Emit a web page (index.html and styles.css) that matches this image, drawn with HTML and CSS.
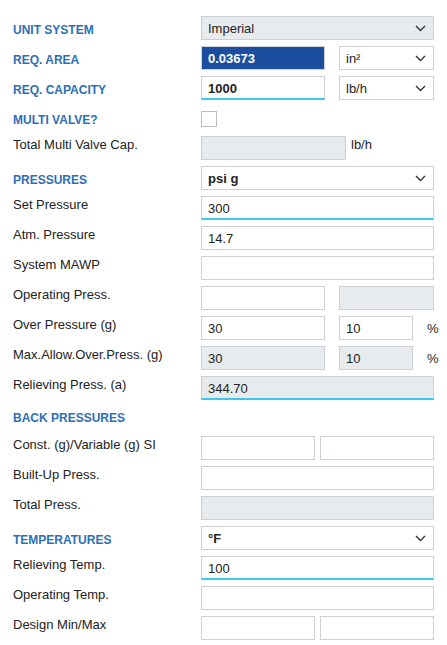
FILE: index.html
```html
<!DOCTYPE html>
<html>
<head>
<meta charset="utf-8">
<link rel="stylesheet" href="styles.css">
</head>
<body>
<div class="form">
  <div class="lbl head">UNIT SYSTEM</div>
  <div class="ctl"><div class="sel gray"><span>Imperial</span><svg class="chev" width="11" height="7" viewBox="0 0 11 7"><path d="M1 1l4.5 4.5L10 1" fill="none" stroke="#333" stroke-width="1.4"/></svg></div></div>

  <div class="lbl head">REQ. AREA</div>
  <div class="ctl split"><input class="inp w124 hl" value="0.03673"><div class="sel w95"><span>in²</span><svg class="chev" width="11" height="7" viewBox="0 0 11 7"><path d="M1 1l4.5 4.5L10 1" fill="none" stroke="#333" stroke-width="1.4"/></svg></div></div>

  <div class="lbl head">REQ. CAPACITY</div>
  <div class="ctl split"><input class="inp w124 focus strong" value="1000"><div class="sel w95"><span>lb/h</span><svg class="chev" width="11" height="7" viewBox="0 0 11 7"><path d="M1 1l4.5 4.5L10 1" fill="none" stroke="#333" stroke-width="1.4"/></svg></div></div>

  <div class="lbl head">MULTI VALVE?</div>
  <div class="ctl"><div class="check"></div></div>

  <div class="lbl">Total Multi Valve Cap.</div>
  <div class="ctl unitrow"><input class="inp w145 dis" value=""><span class="unit">lb/h</span></div>

  <div class="lbl head">PRESSURES</div>
  <div class="ctl"><div class="sel"><span class="strong">psi g</span><svg class="chev" width="11" height="7" viewBox="0 0 11 7"><path d="M1 1l4.5 4.5L10 1" fill="none" stroke="#333" stroke-width="1.4"/></svg></div></div>

  <div class="lbl">Set Pressure</div>
  <div class="ctl"><input class="inp focus" value="300"></div>

  <div class="lbl">Atm. Pressure</div>
  <div class="ctl"><input class="inp" value="14.7"></div>

  <div class="lbl">System MAWP</div>
  <div class="ctl"><input class="inp" value=""></div>

  <div class="lbl">Operating Press.</div>
  <div class="ctl split"><input class="inp w124" value=""><input class="inp w95 dis" value=""></div>

  <div class="lbl">Over Pressure (g)</div>
  <div class="ctl split"><input class="inp w124" value="30"><input class="inp w74" value="10"><span class="pct">%</span></div>

  <div class="lbl">Max.Allow.Over.Press. (g)</div>
  <div class="ctl split"><input class="inp w124 dis" value="30"><input class="inp w74 dis" value="10"><span class="pct">%</span></div>

  <div class="lbl">Relieving Press. (a)</div>
  <div class="ctl"><input class="inp dis focus" value="344.70"></div>

  <div class="lbl head short">BACK PRESSURES</div>
  <div class="ctl short"></div>

  <div class="lbl">Const. (g)/Variable (g) SI</div>
  <div class="ctl halves"><input class="inp" value=""><input class="inp" value=""></div>

  <div class="lbl">Built-Up Press.</div>
  <div class="ctl"><input class="inp" value=""></div>

  <div class="lbl">Total Press.</div>
  <div class="ctl"><input class="inp dis" value=""></div>

  <div class="lbl head">TEMPERATURES</div>
  <div class="ctl"><div class="sel"><span class="strong">°F</span><svg class="chev" width="11" height="7" viewBox="0 0 11 7"><path d="M1 1l4.5 4.5L10 1" fill="none" stroke="#333" stroke-width="1.4"/></svg></div></div>

  <div class="lbl">Relieving Temp.</div>
  <div class="ctl"><input class="inp focus" value="100"></div>

  <div class="lbl">Operating Temp.</div>
  <div class="ctl"><input class="inp" value=""></div>

  <div class="lbl">Design Min/Max</div>
  <div class="ctl halves"><input class="inp" value=""><input class="inp" value=""></div>
</div>
</body>
</html>
```
FILE: styles.css
```css
* { box-sizing: border-box; }
html, body { margin: 0; padding: 0; background: #fff; }
body { font-family: "Liberation Sans", Arial, sans-serif; color: #222; }

.form {
  display: grid;
  grid-template-columns: 188px 233px;
  grid-auto-rows: 24px;
  row-gap: 6px;
  padding: 16px 13px 0 13px;
}
.form .short { height: 22px; }

.lbl {
  font-size: 13px;
  line-height: 16px;
  padding-top: 1px;
  color: #222;
  white-space: nowrap;
}
.lbl.head {
  font-weight: bold;
  font-size: 12px;
  color: #2c6fb7;
  line-height: 24px;
  padding-top: 2px;
}
.lbl.head.short { line-height: 22px; padding-top: 1px; }

.ctl { display: flex; align-items: center; height: 24px; }
.ctl.short { height: 22px; }
.split { gap: 14px; }
.halves { gap: 5px; }
.halves .inp { flex: 1 1 0; width: auto; min-width: 0; }
.unitrow { gap: 5px; }

.inp, .sel {
  height: 24px;
  width: 100%;
  border: 1px solid #cdd1d5;
  background: #fff;
  font-family: "Liberation Sans", Arial, sans-serif;
  font-size: 13px;
  color: #222;
  padding: 0 6px;
  margin: 0;
  outline: none;
  border-radius: 0;
}
.inp { display: block; }
.sel {
  display: flex;
  align-items: center;
  justify-content: space-between;
  padding: 0 6px 0 6px;
}
.chev { display: block; margin-right: 1px; }
.gray, .dis { background: #e8ebed; }
.w124 { width: 124px; flex: none; }
.w95 { width: 95px; flex: none; }
.w74 { width: 74px; flex: none; }
.w145 { width: 145px; flex: none; }

.hl { background: #1b4e9e; color: #fff; font-weight: bold; border-color: #cdd1d5; }
.strong { font-weight: bold; color: #222; }
.inp.strong { font-weight: bold; }
.focus { border-bottom: 2px solid #3ec7ec; padding-top: 1px; }

.check { width: 16px; height: 16px; border: 1px solid #b9bdc1; background: #fff; margin-top: 2px; }
.unit { font-size: 13px; color: #222; align-self: flex-start; line-height: 16px; padding-top: 1px; }
.pct { font-size: 13px; color: #222; margin-left: 0; }
```
